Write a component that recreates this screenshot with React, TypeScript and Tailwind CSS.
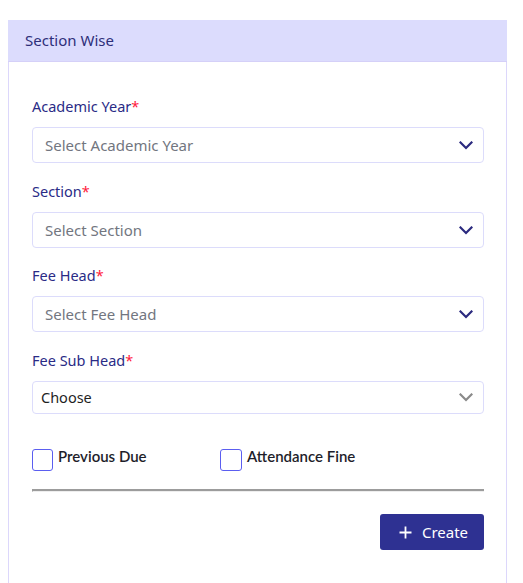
import React from "react";

function Chevron({ gray }: { gray?: boolean }) {
  return (
    <svg width="14" height="9" viewBox="0 0 14 9" fill="none">
      <path d="M1.5 1.5 L7 7 L12.5 1.5" stroke={gray ? "#8a8a8a" : "#2b2a7f"} strokeWidth="2.2" strokeLinecap="square" />
    </svg>
  );
}

function Field({ label, placeholder }: { label: string; placeholder: string }) {
  return (
    <div className="flex flex-col">
      <div className="text-[14.5px] leading-[20px] text-[#2a2b86] h-[20px]">
        {label}
        <span className="text-[#ff1a3c]">*</span>
      </div>
      <div className="mt-[11px] h-[36px] rounded-[4px] border border-[#dcdcfb] bg-white flex items-center justify-between pl-[12px] pr-[10px]">
        <span className="text-[15px] text-[#727680]">{placeholder}</span>
        <Chevron />
      </div>
    </div>
  );
}

export default function App() {
  return (
    <div className="w-[523px] h-[583px] bg-white overflow-hidden pt-[20px] pl-[8px]" style={{ fontFamily: '"Noto Sans", "Open Sans", sans-serif' }}>
      <div className="w-[499px] h-[600px] border border-[#dcd7fb] border-t-0">
        <div className="h-[42px] bg-[#dcdcfd] border-b border-[#d5d0f8] flex items-center pl-[17px] -ml-px -mr-px">
          <span className="text-[15px] text-[#2e2f7a]">Section Wise</span>
        </div>
        <div className="pl-[23px] pr-[22px] pt-[34px]">
          <div className="flex flex-col gap-[18px]">
            <Field label="Academic Year" placeholder="Select Academic Year" />
            <Field label="Section" placeholder="Select Section" />
          </div>
          <div className="mt-[17px]">
            <Field label="Fee Head" placeholder="Select Fee Head" />
          </div>
          <div className="mt-[18px] flex flex-col">
            <div className="text-[14.5px] leading-[20px] h-[20px] text-[#2a2b86]">
              Fee Sub Head<span className="text-[#ff1a3c]">*</span>
            </div>
            <div className="mt-[11px] h-[33px] rounded-[4px] border border-[#dcdcfb] bg-white flex items-center justify-between pl-[8px] pr-[10px]">
              <span className="text-[14.5px] text-[#1f1f1f]">Choose</span>
              <Chevron gray />
            </div>
          </div>
          <div className="mt-[35px] flex items-start" style={{ fontFamily: "Lato, sans-serif" }}>
            <div className="flex items-start w-[188px]">
              <div className="w-[21px] h-[22px] rounded-[3px] border border-[#5b5ef0] bg-white" />
              <span className="ml-[5px] -mt-[4px] text-[15px] font-semibold text-[#1e1e2a]">Previous Due</span>
            </div>
            <div className="flex items-start">
              <div className="w-[22px] h-[22px] rounded-[3px] border border-[#5b5ef0] bg-white" />
              <span className="ml-[5px] -mt-[4px] text-[15px] font-semibold text-[#1e1e2a]">Attendance Fine</span>
            </div>
          </div>
          <div className="mt-[18px] h-[3px] border-t-2 border-b border-l border-t-[#9c9c9c] border-b-[#eeeeee] border-l-[#9c9c9c]" />
          <div className="mt-[22px] flex justify-end">
            <button className="w-[104px] h-[36px] rounded-[3px] bg-[#2e3192] text-white flex items-center justify-center gap-[10px] pl-[3px] text-[15px]">
              <svg width="13" height="13" viewBox="0 0 13 13">
                <path d="M6.5 0.5 V12.5 M0.5 6.5 H12.5" stroke="white" strokeWidth="1.8" />
              </svg>
              <span>Create</span>
            </button>
          </div>
        </div>
      </div>
    </div>
  );
}
